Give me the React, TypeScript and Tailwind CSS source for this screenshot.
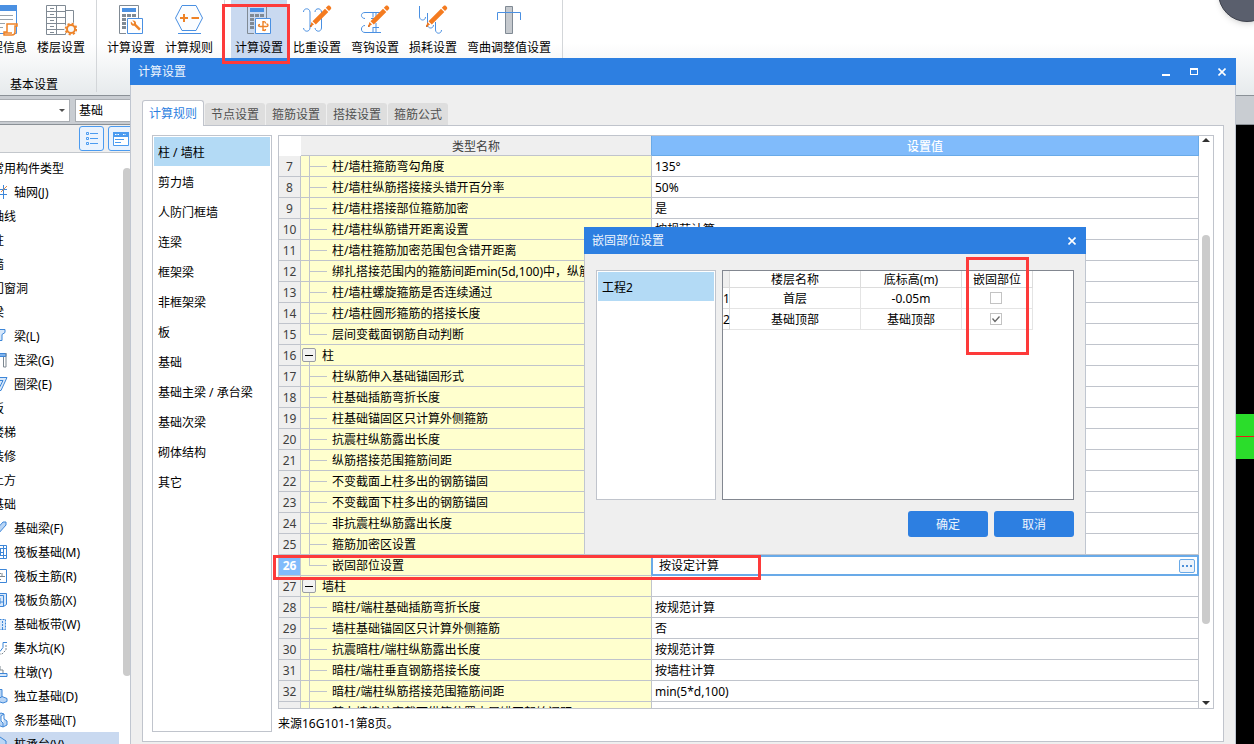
import React from "react";

type Row = { no?: number; name: string; value?: string; kind?: "group" | "last"; selected?: boolean };

const rows: Row[] = [
  { no: 7, name: "柱/墙柱箍筋弯勾角度", value: "135°" },
  { no: 8, name: "柱/墙柱纵筋搭接接头错开百分率", value: "50%" },
  { no: 9, name: "柱/墙柱搭接部位箍筋加密", value: "是" },
  { no: 10, name: "柱/墙柱纵筋错开距离设置", value: "按规范计算" },
  { no: 11, name: "柱/墙柱箍筋加密范围包含错开距离" },
  { no: 12, name: "绑扎搭接范围内的箍筋间距min(5d,100)中，纵筋d的取值" },
  { no: 13, name: "柱/墙柱螺旋箍筋是否连续通过" },
  { no: 14, name: "柱/墙柱圆形箍筋的搭接长度" },
  { no: 15, name: "层间变截面钢筋自动判断", kind: "last" },
  { no: 16, name: "柱", kind: "group" },
  { no: 17, name: "柱纵筋伸入基础锚固形式" },
  { no: 18, name: "柱基础插筋弯折长度" },
  { no: 19, name: "柱基础锚固区只计算外侧箍筋" },
  { no: 20, name: "抗震柱纵筋露出长度" },
  { no: 21, name: "纵筋搭接范围箍筋间距" },
  { no: 22, name: "不变截面上柱多出的钢筋锚固" },
  { no: 23, name: "不变截面下柱多出的钢筋锚固" },
  { no: 24, name: "非抗震柱纵筋露出长度" },
  { no: 25, name: "箍筋加密区设置" },
  { no: 26, name: "嵌固部位设置", value: "按设定计算", kind: "last", selected: true },
  { no: 27, name: "墙柱", kind: "group" },
  { no: 28, name: "暗柱/端柱基础插筋弯折长度", value: "按规范计算" },
  { no: 29, name: "墙柱基础锚固区只计算外侧箍筋", value: "否" },
  { no: 30, name: "抗震暗柱/端柱纵筋露出长度", value: "按规范计算" },
  { no: 31, name: "暗柱/端柱垂直钢筋搭接长度", value: "按墙柱计算" },
  { no: 32, name: "暗柱/端柱纵筋搭接范围箍筋间距", value: "min(5*d,100)" },
  { name: "剪力墙墙柱变截面纵筋位置本层错开起始间距" },
];

const categories = ["柱 / 墙柱", "剪力墙", "人防门框墙", "连梁", "框架梁", "非框架梁", "板", "基础", "基础主梁 / 承台梁", "基础次梁", "砌体结构", "其它"];

const BLUE = "#4a90e2";
const GRAY = "#808a94";
const ORANGE = "#ee8328";

function Svg({ children, className = "size-8" }: { children: React.ReactNode; className?: string }) {
  return (
    <svg viewBox="0 0 32 32" className={className} fill="none" aria-hidden="true">
      {children}
    </svg>
  );
}

function Calculator({ children }: { children: React.ReactNode }) {
  return (
    <Svg>
      <path d="M4.5 1.5h19v13M11 29.500h-6.500v-28" stroke={GRAY} />
      <path d="M7 4h14v4H7z" fill={BLUE} />
      <path d="M7 10h4v3H7zM12 10h4v3h-4zM17 10h4v3h-4zM7 14h4v3H7zM7 18h4v3H7zM7 22h4v3H7z" fill={GRAY} />
      <path d="M12.500 14.500h15v15h-15z" fill="#fff" stroke={BLUE} />
      {children}
    </Svg>
  );
}

const Pencil = () => (
  <g fill="#f47b20">
    <path d="M9 23l1.500-5L13 20.500z M11.500 17.300L24 4.800l3.300 3.200L14.800 20.500z" />
    <path d="M24.800 3.800l2-2c1.500-1 4.200 1.700 3.200 3.200l-2 2z" />
    <path d="M9 23l.6-2.200 1.600 1.600z" fill="#c85a10" />
  </g>
);

const ribbonIcons = {
  info: (
    <Svg>
      <path d="M1.500 1.500h28v28h-28z" fill="#fff" stroke={BLUE} />
      <path d="M1 1h29v6H1z" fill={BLUE} />
      <path d="M4 11.500h22M4 15.500h22M4 19.500h14M4 23.500h12" stroke="#9aa3ab" />
      <path d="M20 20h10v2h-2v6c0 2-1 3-3 3h-8v-3h3z" fill="#fff" stroke={ORANGE} strokeWidth="1.500" />
      <path d="M17 29h8" stroke={ORANGE} strokeWidth="1.500" />
    </Svg>
  ),
  floor: (
    <Svg>
      <path d="M1.500 1.500h19v29h-19zM1.500 7.500h19M1.500 13.500h19M1.500 19.500h19M1.500 25.500h19M11.500 1.500v29M20.500 6.500h8v14M5 4.500h4M5 10.500h4M5 16.500h4M5 22.500h4M5 28.500h4" stroke={GRAY} />
      <circle cx="26" cy="25" r="6.800" fill="#f7f9fa" />
      <circle cx="26" cy="25" r="4" stroke={ORANGE} strokeWidth="2" />
      <circle cx="26" cy="25" r="5.400" stroke={ORANGE} strokeWidth="1.800" strokeDasharray="2.120 2.120" />
    </Svg>
  ),
  wrench: (
    <Calculator>
      <path d="M16 17.500c-1 2.500 1 4.800 3.300 4.200l4.700 4.800 1.800-1.800-4.800-4.700c.6-2.200-1.500-4.200-3.800-3.400l2 2-.9 1.600z" fill={ORANGE} />
    </Calculator>
  ),
  rule: (
    <Svg>
      <path d="M9 1.500h14l6.500 12.500-6.500 12.500H9L2.500 14z" fill="#fbfdff" stroke={BLUE} />
      <path d="M7 14h8M11 10v8M18.500 14H26" stroke={ORANGE} strokeWidth="2" />
      <path d="M5 29.500h23" stroke={BLUE} />
    </Svg>
  ),
  rebarCalc: (
    <Calculator>
      <path d="M22.500 19.500c0-2.500-2.500-2.500-2.500 0v5.500c0 2 2.500 2 2.500 0M17 20.500c-2 0-2 2 0 2h6.500c2 0 2-2.500 0-2.500M20 17v10" stroke={ORANGE} strokeWidth="1.400" />
    </Calculator>
  ),
  weight: (
    <Svg>
      <path d="M2.500 8c0-4 6-4.500 6.500 0v16c-.5 4.500-6 4-6.500 0M14 8c0-4 6-4.500 6.500 0v16c-.5 4.500-6 4-6.500 0" stroke={BLUE} />
      <Pencil />
    </Svg>
  ),
  hook: (
    <Svg>
      <path d="M22 8.500H6c-5 0-4.500 6 0 6M6 21.500c-4.500 0-5 7 0 7h16M14 8.500v5M14 23v5M17 8.500v5M12 14.500h5M17 19v9M14 23.500h6" stroke={BLUE} />
      <Pencil />
    </Svg>
  ),
  loss: (
    <Svg>
      <path d="M2.500 2v11c.5 4 6 4 6 0M10.500 9v12c.5 4 6 4 6 0M18.500 18v8c.5 4.500 6 4 6 0" stroke={BLUE} />
      <Pencil />
    </Svg>
  ),
  bend: (
    <Svg>
      <path d="M12.500 2.500h7v27h-7z" fill="#c5c9ce" stroke={GRAY} />
      <path d="M4.500 16V8.500h23V16" stroke={BLUE} />
    </Svg>
  ),
};

function RibbonButton({ icon, label, active }: { icon: React.ReactNode; label: string; active?: boolean }) {
  return (
    <button
      className={
        "flex h-[58px] shrink-0 flex-col items-center overflow-visible whitespace-nowrap pt-1 " +
        (active ? "mx-px w-14 bg-[#c9d9f0]" : "min-w-[58px] px-[5px]")
      }
    >
      {icon}
      <span className="h-[22px] leading-6">{label}</span>
    </button>
  );
}

const Divider = () => <div className="mr-[5px] ml-[6px] h-[92px] w-px shrink-0 bg-[#d3d6d9]" />;

function Ribbon() {
  return (
    <header className="flex h-24 shrink-0 overflow-hidden border-b border-[#8b9197] bg-linear-to-b from-white from-45% to-[#e6eaec]">
      <div className="-ml-[26px] flex shrink-0 flex-col">
        <div className="flex">
          <RibbonButton icon={ribbonIcons.info} label="工程信息" />
          <RibbonButton icon={ribbonIcons.floor} label="楼层设置" />
        </div>
        <span className="pl-1 text-center leading-[54px]">基本设置</span>
      </div>
      <Divider />
      <RibbonButton icon={ribbonIcons.wrench} label="计算设置" />
      <RibbonButton icon={ribbonIcons.rule} label="计算规则" />
      <Divider />
      <RibbonButton icon={ribbonIcons.rebarCalc} label="计算设置" active />
      <RibbonButton icon={ribbonIcons.weight} label="比重设置" />
      <RibbonButton icon={ribbonIcons.hook} label="弯钩设置" />
      <RibbonButton icon={ribbonIcons.loss} label="损耗设置" />
      <RibbonButton icon={ribbonIcons.bend} label="弯曲调整值设置" />
      <Divider />
    </header>
  );
}

const treeIcon = (body: React.ReactNode) => (
  <svg viewBox="0 0 16 16" className="size-4 shrink-0" fill="none" stroke="#3d86d8" aria-hidden="true">
    {body}
  </svg>
);

const tree: { label: string; icon?: React.ReactNode; selected?: boolean }[] = [
  { label: "常用构件类型" },
  { label: "轴网(J)", icon: treeIcon(<><path d="M5.500 1v14M11.500 1v14M1 5.500h14M1 10.500h14" /><path d="M9 8l6-6" stroke="#e08a4a" /></>) },
  { label: "轴线" },
  { label: "柱" },
  { label: "墙" },
  { label: "门窗洞" },
  { label: "梁" },
  { label: "梁(L)", icon: treeIcon(<path d="M2 1.500h11v3l-3 2v6h-3v-8H2z" fill="#d8e8fa" />) },
  { label: "连梁(G)", icon: treeIcon(<><path d="M1 1.500h13v3H1z" fill="#7fb2ec" /><path d="M11.500 5v10h2.500V1" stroke="#7c8790" /></>) },
  { label: "圈梁(E)", icon: treeIcon(<path d="M1 1.500h14L9 14.500H7zM5 4.500h6l-3 6z" fill="#d8e8fa" />) },
  { label: "板" },
  { label: "楼梯" },
  { label: "装修" },
  { label: "土方" },
  { label: "基础" },
  { label: "基础梁(F)", icon: treeIcon(<path d="M3 11L11 2h3v3l-8 9H3z" fill="#b9d5f5" />) },
  { label: "筏板基础(M)", icon: treeIcon(<path d="M1.500 1.500h13v13h-13zM4.500 1.500v13M8.500 4v8M11.500 1.500v13M1.500 4.500h13M4 8.500h8M1.500 11.500h13" />) },
  { label: "筏板主筋(R)", icon: treeIcon(<><path d="M1.500 1.500h13v13h-13z" /><path d="M5 5.500h4M8 8.500h5M10 5v3M5 11.500h4" stroke="#7c8790" /></>) },
  { label: "筏板负筋(X)", icon: treeIcon(<path d="M3.500 1.500h11v11l-3 2h-10v-11h10v11M8 6v6M8 10h3" fill="#d8e8fa" />) },
  { label: "基础板带(W)", icon: treeIcon(<path d="M1.500 3.500h12v10h-12zM6.500 3.500v10M10.500 5v8" fill="#d8e8fa" strokeDasharray="2 1" />) },
  { label: "集水坑(K)", icon: treeIcon(<><path d="M15 2.500h-4v5l-3 4H4" /><path d="M14 5v5l-4 4H5" stroke="#7c8790" strokeDasharray="2 1" /></>) },
  { label: "柱墩(Y)", icon: treeIcon(<><path d="M1 9.500h14v3H1z" fill="#d8e8fa" /><path d="M5 9V6h6v3M8 2v4" stroke="#7c8790" /></>) },
  { label: "独立基础(D)", icon: treeIcon(<path d="M6 1.500h4v7l5 2v3l-4 1.500-9-3V9l4-1zM10 8.500l-3 2-5-1.500M7 10.500V2" fill="#b9d5f5" />) },
  { label: "条形基础(T)", icon: treeIcon(<path d="M5 3l4-2 3 1v5l3 2v4l-4 2-8-3V8l4-2zM12 2l-3 2v5l2 2v4" fill="#b9d5f5" />) },
  { label: "桩承台(V)", icon: treeIcon(<path d="M2 6l6-5 6 4v6l-5 4-7-3z" fill="#b9d5f5" />), selected: true },
];

function Sidebar() {
  return (
    <aside className="flex w-[131px] shrink-0 flex-col overflow-hidden bg-white">
      <div className="flex h-[28px] shrink-0 items-center gap-1 border-b border-[#c3c7cc] bg-[#efefef] pl-[79px]">
        <button aria-label="列表" className="flex size-[25px] shrink-0 items-center justify-center rounded-[3px] border border-[#4b9bf0] bg-[#eaf3fe]">
          <svg viewBox="0 0 14 14" className="size-[14px]" fill="none" stroke="#4b9bf0">
            <path d="M1.500.5h2v2h-2zM1.500 5.500h2v2h-2zM1.500 10.500h2v2h-2zM5 1.500h8M5 6.500h8M5 11.500h8" />
          </svg>
        </button>
        <button aria-label="图标" className="flex size-[25px] shrink-0 items-center justify-center rounded-[3px] border border-[#4b9bf0] bg-[#eaf3fe]">
          <svg viewBox="0 0 16 14" className="h-[14px] w-4" fill="none" stroke="#4b9bf0">
            <path d="M.5.5h15v13H.5z" fill="#fff" />
            <path d="M0 0h16v5H0z" fill="#4b9bf0" stroke="none" />
            <path d="M2 2.500h5M10 2.500h3" stroke="#fff" strokeDasharray="1.500 1" />
            <path d="M2 7.500h9M2 10.500h6" />
          </svg>
        </button>
      </div>
      <div className="flex min-h-0 flex-1 pt-[3px]">
        <ul className="-ml-2 w-[127px] shrink-0">
          {tree.map((t) => (
            <li key={t.label} className={"flex h-6 items-center gap-[6px] whitespace-nowrap " + (t.selected ? "bg-[#c9d9f0]" : "")}>
              {t.icon}
              <span className="pt-[2px]">{t.label}</span>
            </li>
          ))}
        </ul>
        <div className="mt-3 ml-1 h-[508px] w-2 rounded-full bg-[#cbcbcb]" />
      </div>
    </aside>
  );
}

function TreeCell({ row }: { row: Row }) {
  if (row.kind === "group") {
    return (
      <div className="flex h-5 gap-[6px] pl-px">
        <div className="flex w-[14px] flex-col pt-[3px]">
          <button aria-label={"折叠 " + row.name} className="flex size-[14px] shrink-0 items-center justify-center rounded-[2px] border border-[#9a9da2] bg-[#f2f2f2]">
            <span className="h-px w-2 bg-black" />
          </button>
          <span className="ml-[7px] w-px flex-1 bg-[#c0c4cc]" />
        </div>
        <span className="leading-[22px]">{row.name}</span>
      </div>
    );
  }
  return (
    <div className="flex h-5 gap-[5px] pl-2">
      <div className="w-[18px] shrink-0">
        <div className="h-[11px] border-b border-l border-[#c0c4cc]" />
        {row.kind !== "last" && <div className="h-[9px] border-l border-[#c0c4cc]" />}
      </div>
      <span className="overflow-hidden leading-[22px] whitespace-nowrap">{row.name}</span>
    </div>
  );
}

function SettingsTable() {
  return (
    <div className="flex min-h-0 flex-1 overflow-hidden border border-[#c0c4cc]">
      <div className="min-w-0 flex-1 overflow-hidden">
        <table className="w-full table-fixed border-separate border-spacing-0">
          <colgroup>
            <col className="w-[22px]" />
            <col className="w-[351px]" />
            <col />
          </colgroup>
          <thead>
            <tr>
              <td className="h-5 p-0" />
              <th className="h-5 border-r border-b border-r-[#69aae8] border-b-[#c0c4cc] bg-[#efefef] p-0 font-normal text-[#404040]">
                <div className="h-[19px] leading-[21px]">类型名称</div>
              </th>
              <th className="h-5 border-r border-b border-[#69aae8] bg-[#80bbfb] p-0 font-medium text-white">
                <div className="h-[19px] leading-[21px]">设置值</div>
              </th>
            </tr>
          </thead>
          <tbody>
            {rows.map((r) => (
              <tr key={r.name}>
                <td
                  className={
                    "h-[21px] border-r border-b border-[#c0c4cc] p-0 text-center " +
                    (r.selected ? "bg-[#80bbfb] font-bold text-white" : "bg-[#efefef] text-[#404040]")
                  }
                >
                  <div className="h-5 leading-[22px]">{r.no}</div>
                </td>
                <td
                  className={
                    "h-[21px] border-r border-b border-b-[#c0c4cc] bg-[#ffffce] p-0 " +
                    (r.selected ? "border-r-[#69aae8]" : "border-r-[#c0c4cc]")
                  }
                >
                  <TreeCell row={r} />
                </td>
                {r.selected ? (
                  <td className="h-[21px] p-0">
                    <div className="flex h-[21px] items-center border-2 border-l border-[#69aae8] bg-white pr-[2px] pl-[6px]">
                      <input aria-label={r.name} defaultValue={r.value} className="h-4 min-w-0 flex-1 outline-none" />
                      <button aria-label="更多" className="flex h-[14px] w-4 items-center justify-center gap-[2px] rounded-[2px] border border-[#69aae8] bg-[#eef4fb]">
                        <i className="size-[2px] bg-[#4b8fd8]" />
                        <i className="size-[2px] bg-[#4b8fd8]" />
                        <i className="size-[2px] bg-[#4b8fd8]" />
                      </button>
                    </div>
                  </td>
                ) : (
                  <td className="h-[21px] border-r border-b border-[#c0c4cc] bg-white p-0 pl-[3px]">
                    <div className="h-5 leading-[22px]">{r.value}</div>
                  </td>
                )}
              </tr>
            ))}
          </tbody>
        </table>
      </div>
      <div className="flex w-[14px] shrink-0 flex-col items-center bg-white pt-[2px] pb-[3px]">
        <svg viewBox="0 0 8 4" className="h-1 w-2" aria-hidden="true"><path d="M0 4L4 0l4 4z" fill="#303030" /></svg>
        <div className="mt-[93px] h-[389px] w-2 rounded-full bg-[#cbcbcb]" />
        <svg viewBox="0 0 8 4" className="mt-auto h-1 w-2" aria-hidden="true"><path d="M0 0h8L4 4z" fill="#303030" /></svg>
      </div>
    </div>
  );
}

const CloseIcon = () => (
  <svg viewBox="0 0 8 8" className="size-2" fill="none" stroke="#fff" strokeWidth="1.600" aria-hidden="true">
    <path d="M.5.5l7 7M7.500.5l-7 7" />
  </svg>
);

function SettingsDialog() {
  const tabs = ["节点设置", "箍筋设置", "搭接设置", "箍筋公式"];
  return (
    <section className="absolute top-[58px] right-[18px] bottom-0 left-[130px] flex flex-col">
      <div className="flex h-[27px] shrink-0 items-center bg-[#2d7fe1] pr-[10px] pl-2 text-[#eef5fd]">
        <h1 className="flex-1">计算设置</h1>
        <div className="flex gap-5">
          <button aria-label="最小化" className="flex size-2 items-end"><span className="h-[2px] w-2 bg-white" /></button>
          <button aria-label="最大化" className="h-[7px] w-2 border border-t-2 border-white" />
          <button aria-label="关闭"><CloseIcon /></button>
        </div>
      </div>
      <div className="flex min-h-0 flex-1 flex-col border-x border-[#c0c6d0] bg-[#efefef] px-[11px] pt-[15px] pb-[2px]">
        <nav className="relative flex h-[26px] shrink-0 items-end gap-px" role="tablist">
          <button role="tab" aria-selected="true" className="h-[26px] w-[62px] rounded-t-[3px] border border-b-0 border-[#c0c4cc] bg-white text-[#2d7fe1]">
            计算规则
          </button>
          {tabs.map((t) => (
            <button key={t} role="tab" className="mb-px h-[22px] w-[60px] rounded-t-[3px] bg-[#dedede] pt-[2px] text-[#505050]">
              {t}
            </button>
          ))}
        </nav>
        <div className="-mt-px flex min-h-0 flex-1 gap-[6px] border border-[#c0c4cc] bg-white p-[9px]">
          <ul className="w-[120px] shrink-0 border border-[#c0c4cc] p-px">
            {categories.map((c, i) => (
              <li key={c} className="h-[30px]">
                <button className={"h-[29px] w-full pt-[2px] pl-1 text-left whitespace-nowrap " + (i === 0 ? "bg-[#b3daf5]" : "")}>{c}</button>
              </li>
            ))}
          </ul>
          <div className="flex min-w-0 flex-1 flex-col">
            <SettingsTable />
            <p className="h-[23px] shrink-0 leading-[30px]">来源16G101-1第8页。</p>
          </div>
        </div>
      </div>
    </section>
  );
}

function FloorTable() {
  const floors = [
    { name: "首层", level: "-0.05m", fixed: false },
    { name: "基础顶部", level: "基础顶部", fixed: true },
  ];
  return (
    <div className="min-w-0 flex-1 border border-[#828790] bg-white">
      <table className="w-[310px] table-fixed border-separate border-spacing-0 text-center">
        <colgroup>
          <col className="w-[7px]" />
          <col className="w-[131px]" />
          <col className="w-[101px]" />
          <col className="w-[71px]" />
        </colgroup>
        <thead>
          <tr>
            <td className="h-[17px] border-r border-b border-[#dcdcdc] bg-[#efefef] p-0" />
            {["楼层名称", "底标高(m)", "嵌固部位"].map((h) => (
              <th key={h} className="h-[17px] border-r border-b border-[#dcdcdc] p-0 font-normal">
                <div className="h-4 leading-[18px]">{h}</div>
              </th>
            ))}
          </tr>
        </thead>
        <tbody>
          {floors.map((f, i) => (
            <tr key={f.name}>
              <td className="h-[21px] border-r border-b border-[#dcdcdc] p-0"><div className="h-5 leading-[22px]">{i + 1}</div></td>
              <td className="h-[21px] border-r border-b border-[#e4e4e4] p-0"><div className="h-5 leading-[22px]">{f.name}</div></td>
              <td className="h-[21px] border-r border-b border-[#e4e4e4] p-0"><div className="h-5 leading-[22px]">{f.level}</div></td>
              <td className="h-[21px] border-r border-b border-[#e4e4e4] p-0">
                <div className="flex h-5 items-center justify-center pr-[2px]">
                  <label className="grid size-3">
                    <input
                      type="checkbox"
                      aria-label={f.name + "嵌固部位"}
                      defaultChecked={f.fixed}
                      className="peer col-start-1 row-start-1 size-3 appearance-none border border-[#c3c3c3] bg-white"
                    />
                    <svg viewBox="0 0 12 12" className="pointer-events-none invisible col-start-1 row-start-1 size-3 peer-checked:visible" fill="none" stroke="#666" strokeWidth="1.300">
                      <path d="M2.500 5.500l2.500 3 4.500-5" />
                    </svg>
                  </label>
                </div>
              </td>
            </tr>
          ))}
        </tbody>
      </table>
    </div>
  );
}

function FixedPartDialog() {
  return (
    <section className="absolute top-[227px] left-[584px] flex h-[328px] w-[502px] flex-col">
      <div className="flex h-[27px] shrink-0 items-center justify-between bg-[#2d7fe1] pr-[10px] pl-2 text-[#eef5fd]">
        <h2>嵌固部位设置</h2>
        <button aria-label="关闭"><CloseIcon /></button>
      </div>
      <div className="flex min-h-0 flex-1 flex-col gap-[11px] border border-t-0 border-[#c0c6d0] bg-[#efefef] px-[11px] pt-4 pb-[17px]">
        <div className="flex min-h-0 flex-1 gap-[6px]">
          <ul className="w-[120px] shrink-0 border border-[#c0c4cc] bg-white p-px">
            <li>
              <button className="h-[29px] w-full bg-[#b3daf5] pt-[2px] pl-1 text-left">工程2</button>
            </li>
          </ul>
          <FloorTable />
        </div>
        <div className="flex shrink-0 justify-end gap-[6px]">
          <button className="h-[26px] w-20 rounded-[3px] bg-[#2d7fe1] pt-[2px] text-[#eef5fd]">确定</button>
          <button className="h-[26px] w-20 rounded-[3px] bg-[#2d7fe1] pt-[2px] text-[#eef5fd]">取消</button>
        </div>
      </div>
    </section>
  );
}

export default function App() {
  return (
    <div className="relative flex h-screen flex-col overflow-hidden bg-white font-['Noto_Sans','Noto_Sans_CJK_SC',sans-serif] text-[12px] leading-4 text-black">
      <Ribbon />
      <div className="flex h-[29px] shrink-0 items-center gap-[5px] border-b border-[#8b9197] bg-[#c9cdd2]">
        <div className="relative flex w-[70px] items-center">
          <select aria-label="楼层" className="h-[23px] w-full appearance-none border border-l-0 border-[#a9adb2] bg-white">
            <option />
          </select>
          <svg viewBox="0 0 6 3" className="pointer-events-none absolute right-[5px] h-[3px] w-[6px]" aria-hidden="true"><path d="M0 0h6L3 3z" fill="#505050" /></svg>
        </div>
        <select aria-label="构件类型" className="h-[23px] w-[90px] appearance-none border border-[#a9adb2] bg-white pt-[2px] pl-[3px]">
          <option>基础</option>
        </select>
      </div>
      <div className="flex min-h-0 flex-1">
        <Sidebar />
        <main className="relative min-w-0 flex-1 overflow-hidden bg-black">
          <div className="absolute top-[289px] right-0 flex h-[45px] w-10 items-center bg-[#2bdd2b]">
            <span className="h-px w-full bg-[#f01818]" />
          </div>
        </main>
      </div>
      <div className="absolute -top-9 -right-[22px] size-[58px] rounded-full border border-[#3d414c] bg-[#5a5f6d] shadow-md" />
      <SettingsDialog />
      <FixedPartDialog />
      <div className="pointer-events-none absolute top-1 left-[222px] h-[60px] w-[68px] border-3 border-[#fd3a3a]" />
      <div className="pointer-events-none absolute top-[257px] left-[966px] h-[98px] w-[63px] border-3 border-[#fd3a3a]" />
      <div className="pointer-events-none absolute top-[555px] left-[273px] h-[25px] w-[488px] border-3 border-[#fd3a3a]" />
    </div>
  );
}
